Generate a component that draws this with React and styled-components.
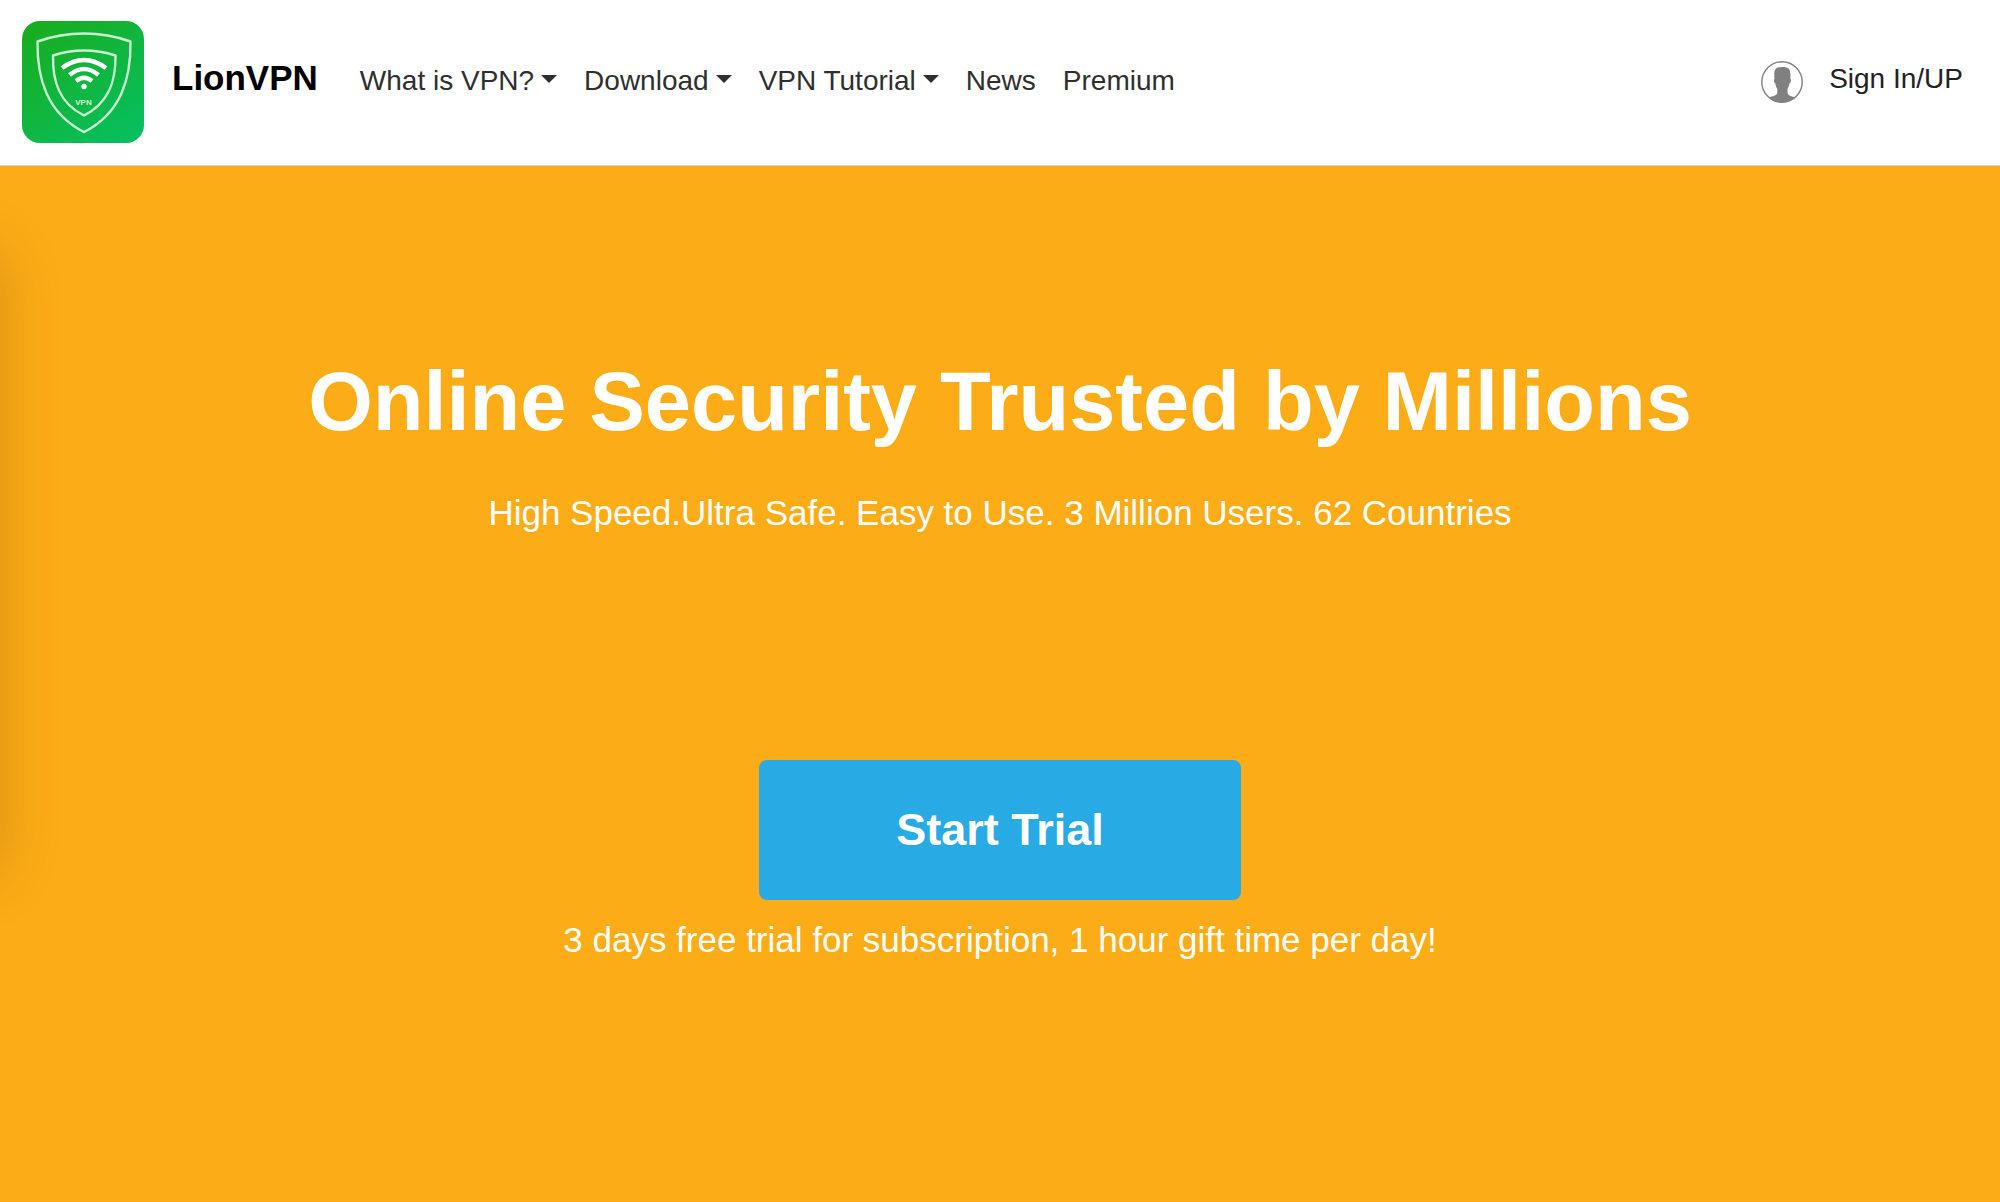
import React from "react";
import styled, { createGlobalStyle } from "styled-components";

const GlobalStyle = createGlobalStyle`
  *, *::before, *::after { box-sizing: border-box; }
  html, body, #root { height: 100%; }
  body {
    margin: 0;
    background: #fff;
    color: #2f2f2f;
    font-family: "Liberation Sans", Arial, Helvetica, sans-serif;
  }
`;

const Page = styled.div`
  min-height: 100%;
  display: flex;
  flex-direction: column;
`;

const Header = styled.header`
  display: flex;
  align-items: center;
  padding: 21px 37px 22px 22px;
  border-bottom: 1px solid #d8d4cc;
`;

const Brand = styled.a`
  display: flex;
  align-items: center;
  gap: 28px;
  color: #000;
  font-size: 35px;
  line-height: 40px;
  font-weight: 700;
  text-decoration: none;
  padding-right: 42px;
`;

const BrandName = styled.span`
  padding-bottom: 8px;
`;

const Logo = styled.svg`
  display: block;
  width: 122px;
  height: 122px;
`;

const NavList = styled.ul`
  display: flex;
  gap: 27px;
  list-style: none;
  margin: 0;
  padding: 0 0 2px;
`;

const NavButton = styled.button`
  display: flex;
  align-items: center;
  gap: 7px;
  padding: 0;
  border: 0;
  background: none;
  color: inherit;
  font: inherit;
  font-size: 28px;
  line-height: 40px;
  cursor: pointer;
`;

const Caret = styled.span`
  border: 8px solid transparent;
  border-top-color: currentColor;
  border-bottom: 0;
  margin-bottom: 4px;
`;

const NavLink = styled.a`
  display: block;
  color: inherit;
  font-size: 28px;
  line-height: 40px;
  text-decoration: none;
`;

const Account = styled.a`
  display: flex;
  align-items: center;
  gap: 26px;
  margin-left: auto;
  color: #222;
  font-size: 28px;
  line-height: 40px;
  text-decoration: none;
`;

const AccountLabel = styled.span`
  padding-bottom: 6px;
`;

const Avatar = styled.svg`
  display: block;
  width: 42px;
  height: 42px;
`;

const Hero = styled.main`
  position: relative;
  overflow: hidden;
  flex: 1;
  display: flex;
  flex-direction: column;
  align-items: center;
  padding: 188px 24px 120px;
  background: #fcac16;
  color: #fff;
  text-align: center;
`;

/* Closed side drawer: only its shadow reaches into the page. */
const Drawer = styled.div`
  position: absolute;
  top: 86px;
  right: 100%;
  width: 300px;
  height: 622px;
  box-shadow: 0 0 60px rgba(0, 0, 0, 0.16);
`;

const Title = styled.h1`
  margin: 0;
  font-size: 83px;
  line-height: 96px;
  font-weight: 700;
`;

const Text = styled.p`
  margin: 0;
  font-size: 35px;
  line-height: 40px;
`;

const Lead = styled(Text)`
  margin-top: 43px;
`;

const TrialButton = styled.button`
  width: 482px;
  max-width: 100%;
  margin: 227px 0 20px;
  padding: 42px 24px;
  border: 0;
  border-radius: 8px;
  background: #28aae4;
  color: #fff;
  font: inherit;
  font-size: 45px;
  line-height: 56px;
  font-weight: 700;
  cursor: pointer;
`;

const menu = [
  { label: "What is VPN?", dropdown: true },
  { label: "Download", dropdown: true },
  { label: "VPN Tutorial", dropdown: true },
  { label: "News" },
  { label: "Premium" },
];

function LionLogo() {
  return (
    <Logo viewBox="0 0 122 122" aria-hidden="true">
      <defs>
        <linearGradient id="logoFill" x1="0.15" y1="0" x2="0.85" y2="1">
          <stop offset="0" stopColor="#18ad20" />
          <stop offset="1" stopColor="#07bf5f" />
        </linearGradient>
      </defs>
      <rect width="122" height="122" rx="18" fill="url(#logoFill)" />
      <g fill="none" stroke="#c8f2cf" strokeWidth="2.4" strokeLinejoin="round">
        <path d="M15.5 20.5Q38 12.5 62 12.5T108.5 20.5C109 58 99 92 62 111C25 92 15 58 15.5 20.5Z" />
        <path d="M31 34.5Q46 29.5 62 29.5T93.5 34.5C94 60 87 82 62 94.5C37 82 30.5 60 31 34.5Z" />
      </g>
      <g fill="none" stroke="#fff" strokeWidth="4.5">
        <path d="M40 47Q62 31 84 47" />
        <path d="M47.5 54Q62 42 76.500 54" />
        <path d="M54 60Q62 53.5 70 60" />
      </g>
      <circle cx="62" cy="65.5" r="2.7" fill="#fff" />
      <text x="61.5" y="84" textAnchor="middle" fontSize="8" fill="#d5f5da">
        VPN
      </text>
    </Logo>
  );
}

function AvatarIcon() {
  return (
    <Avatar viewBox="0 0 42 42" aria-hidden="true">
      <circle cx="21" cy="21" r="20.2" fill="none" stroke="#808080" strokeWidth="1.4" />
      <path
        fill="#808080"
        d="M13.500 18C12.5 9 14 6 21.3 6S30 9 29.3 18C30.5 18 30 22 28.5 22.5C28 25 27.500 26.5 26.500 27.5V32C27.5 35 30 35 34.5 36.5Q29 41.5 21 41.5T7.500 36.5C12 35 15.500 35 16.3 32V27.5C15.3 26.5 14.700 25 14.3 22.5C13 22 12.5 18 13.5 18Z"
      />
    </Avatar>
  );
}

export default function App() {
  return (
    <Page>
      <GlobalStyle />
      <Header>
        <Brand href="#">
          <LionLogo />
          <BrandName>LionVPN</BrandName>
        </Brand>
        <nav>
          <NavList>
            {menu.map(({ label, dropdown }) => (
              <li key={label}>
                {dropdown ? (
                  <NavButton type="button" aria-haspopup="menu">
                    {label}
                    <Caret />
                  </NavButton>
                ) : (
                  <NavLink href="#">{label}</NavLink>
                )}
              </li>
            ))}
          </NavList>
        </nav>
        <Account href="#">
          <AvatarIcon />
          <AccountLabel>Sign In/UP</AccountLabel>
        </Account>
      </Header>
      <Hero>
        <Drawer />
        <Title>Online Security Trusted by Millions</Title>
        <Lead>High Speed.Ultra Safe. Easy to Use. 3 Million Users. 62 Countries</Lead>
        <TrialButton type="button">Start Trial</TrialButton>
        <Text>3 days free trial for subscription, 1 hour gift time per day!</Text>
      </Hero>
    </Page>
  );
}
